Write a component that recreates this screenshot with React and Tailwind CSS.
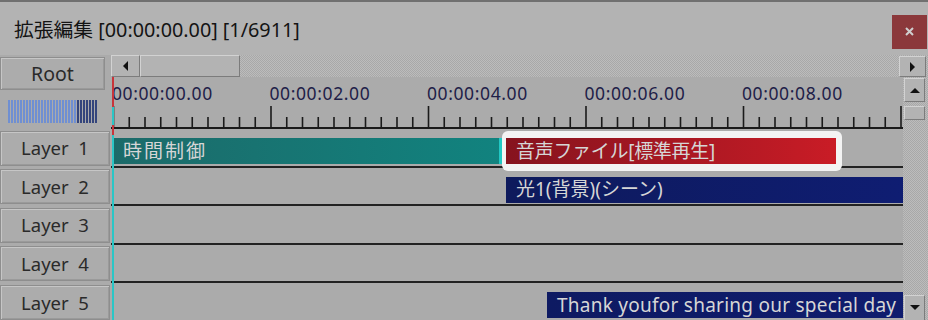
import React from 'react';

const PX_PER_TICK = 15.75;
const ticks = Array.from({ length: 51 }, (_, i) => i);
const labels = ['00:00:00.00', '00:00:02.00', '00:00:04.00', '00:00:06.00', '00:00:08.00'];

const raised =
    'bg-[#b3b3b3] border border-t-[#d2d2d2] border-l-[#d2d2d2] border-r-[#7c7c7c] border-b-[#7c7c7c]';

const track =
    'bg-[#b1b1b1] bg-[image:repeating-conic-gradient(#bcbcbc_0%_25%,#a8a8a8_0%_50%)] bg-[length:2px_2px]';

const LayerButton = ({ label }) => (
    <div className="h-[35px] w-[110px] flex items-center justify-center border border-[#8e8e8e] bg-[#acacac] shadow-[inset_1px_1px_0_#c6c6c6,inset_-1px_-1px_0_#9a9a9a] text-[18.5px] text-[#2a2a2a] whitespace-pre">
        {label}
    </div>
);

const Clip = ({ left, width, from, to, text, z = '', extra = '' }) => (
    <div
        className={`absolute top-[9px] h-[26px] flex items-center pl-[10px] text-[19px] leading-none text-[#d6d6d6] whitespace-nowrap overflow-hidden ${z} ${extra}`}
        style={{ left, width, background: `linear-gradient(90deg, ${from}, ${to})` }}
    >
        {text}
    </div>
);

const Meter = () => (
    <svg width="91" height="23" className="block">
        {Array.from({ length: 30 }, (_, i) => (
            <rect
                key={i}
                x={i * 3}
                y="0"
                width="2"
                height="23"
                fill={i < 23 ? '#6f8fd2' : '#34457c'}
            />
        ))}
    </svg>
);

const Arrow = ({ dir }) => {
    const pts = {
        left: '5,0 5,10 0,5',
        right: '0,0 0,10 5,5',
        up: '0,5 10,5 5,0',
        down: '0,0 10,0 5,5',
    }[dir];
    const vert = dir === 'up' || dir === 'down';
    return (
        <svg width={vert ? 10 : 5} height={vert ? 5 : 10}>
            <polygon points={pts} fill="#111" />
        </svg>
    );
};

export default function App() {
    return (
        <div className="w-[928px] h-[320px] overflow-hidden bg-[#ababab] font-['Noto_Sans','Noto_Sans_CJK_JP',sans-serif] select-none">
            {/* Title bar */}
            <div className="h-[55px] bg-[#b3b3b3] border-t-2 border-[#707070] flex items-center justify-between pl-[14px] pr-[1px]">
                <span className="text-[19.8px] text-[#141414] mt-[3px]">拡張編集 [00:00:00.00] [1/6911]</span>
                <div className="w-[35px] h-[34px] bg-[#8b383b] flex items-center justify-center mt-[6px]">
                    <svg width="9" height="9">
                        <path d="M1 1 L8 8 M8 1 L1 8" stroke="#cfcfcf" strokeWidth="2" />
                    </svg>
                </div>
            </div>

            <div className="flex h-[265px]">
                {/* Left column */}
                <div className="w-[111px] flex flex-col shrink-0">
                    <div className="mt-[2px] w-[105px] h-[33px] flex items-center justify-center text-[19.5px] text-[#2a2a2a] border border-[#8e8e8e] bg-[#acacac] shadow-[inset_1px_1px_0_#c6c6c6,inset_-1px_-1px_0_#9a9a9a]">
                        Root
                    </div>
                    <div className="mt-[10px] ml-[8px]">
                        <Meter />
                    </div>
                    <div className="mt-[8px] flex flex-col gap-[3.6px]">
                        <LayerButton label="Layer  1" />
                        <LayerButton label="Layer  2" />
                        <LayerButton label="Layer  3" />
                        <LayerButton label="Layer  4" />
                        <LayerButton label="Layer  5" />
                    </div>
                </div>

                {/* Right side */}
                <div className="flex-1 flex flex-col">
                    {/* Horizontal scroll bar */}
                    <div className={`h-[23px] flex ${track}`}>
                        <div className={`w-[29px] h-[22px] flex items-center justify-center ${raised}`}>
                            <Arrow dir="left" />
                        </div>
                        <div className={`w-[100px] h-[22px] ${raised}`} />
                        <div className="flex-1" />
                        <div className={`w-[27px] h-[21px] mt-[1px] mr-[2px] flex items-center justify-center ${raised}`}>
                            <Arrow dir="right" />
                        </div>
                    </div>

                    <div className="flex flex-1">
                        {/* Timeline */}
                        <div className="relative w-[792px] shrink-0">
                            {/* Ruler */}
                            <div className="relative h-[52px]">
                                {labels.map((l, i) => (
                                    <span
                                        key={l}
                                        className="absolute top-[8px] text-[17.5px] leading-none text-[#1e2048] tracking-[0.6px]"
                                        style={{ left: 1 + i * 157.5 }}
                                    >
                                        {l}
                                    </span>
                                ))}
                                <svg width="792" height="52" className="absolute left-0 top-0">
                                    {ticks.map((i) => {
                                        const x = 2.5 + i * PX_PER_TICK;
                                        const major = i % 10 === 0;
                                        return (
                                            <line
                                                key={i}
                                                x1={x}
                                                x2={x}
                                                y1={major ? 29 : 40}
                                                y2={51}
                                                stroke="#1a1a1a"
                                                strokeWidth="1.6"
                                            />
                                        );
                                    })}
                                    <rect x="0" y="50" width="792" height="2" fill="#1a1a1a" />
                                </svg>
                            </div>

                            {/* Layer rows */}
                            {[0, 1, 2, 3, 4].map((r) => (
                                <div key={r} className="relative h-[38.6px] border-b-2 border-[#222]">
                                    {r === 0 && (
                                        <>
                                            <Clip left={2} width={390} from="#1c6a69" to="#11837f" text="時間制御" extra="tracking-[2px]" />
                                            <div className="absolute left-[388px] top-[9px] w-[4px] h-[26px] bg-[#21c8c4]" />
                                            <div className="absolute left-[391px] top-[2px] w-[340px] h-[40px] rounded-[6px] bg-[#f3f3f3] z-10" />
                                            <Clip left={395} width={330} from="#86131e" to="#c91c26" text="音声ファイル[標準再生]" z="z-20" extra="tracking-[-0.3px]" />
                                        </>
                                    )}
                                    {r === 1 && (
                                        <Clip left={395} width={397} from="#0e1a5c" to="#0f1d72" text="光1(背景)(シーン)" />
                                    )}
                                    {r === 4 && (
                                        <Clip left={436} width={356} from="#0e1a62" to="#0f1c6e" text="Thank youfor sharing our special day" extra="tracking-[0.25px]" />
                                    )}
                                </div>
                            ))}

                            {/* Cursor */}
                            <div className="absolute left-[1px] top-0 w-[2px] h-[30px] bg-[#c8343a]" />
                            <div className="absolute left-[1px] top-[30px] bottom-0 w-[2px] bg-[#2ac6c6] z-30" />
                            <div className="absolute left-[1px] top-[48px] w-[2px] h-[10px] bg-[#c8343a] z-30" />
                        </div>

                        {/* Vertical scroll bar */}
                        <div className={`flex-1 flex flex-col items-start pl-[1px] ${track}`}>
                            <div className={`mt-[1px] w-[21px] h-[24px] flex items-center justify-center ${raised}`}>
                                <Arrow dir="up" />
                            </div>
                            <div className={`mt-[4px] w-[21px] h-[14px] ${raised}`} />
                            <div className="flex-1" />
                            <div className={`mb-[1px] w-[21px] h-[26px] flex items-center justify-center ${raised}`}>
                                <Arrow dir="down" />
                            </div>
                        </div>
                    </div>
                </div>
            </div>
        </div>
    );
}
